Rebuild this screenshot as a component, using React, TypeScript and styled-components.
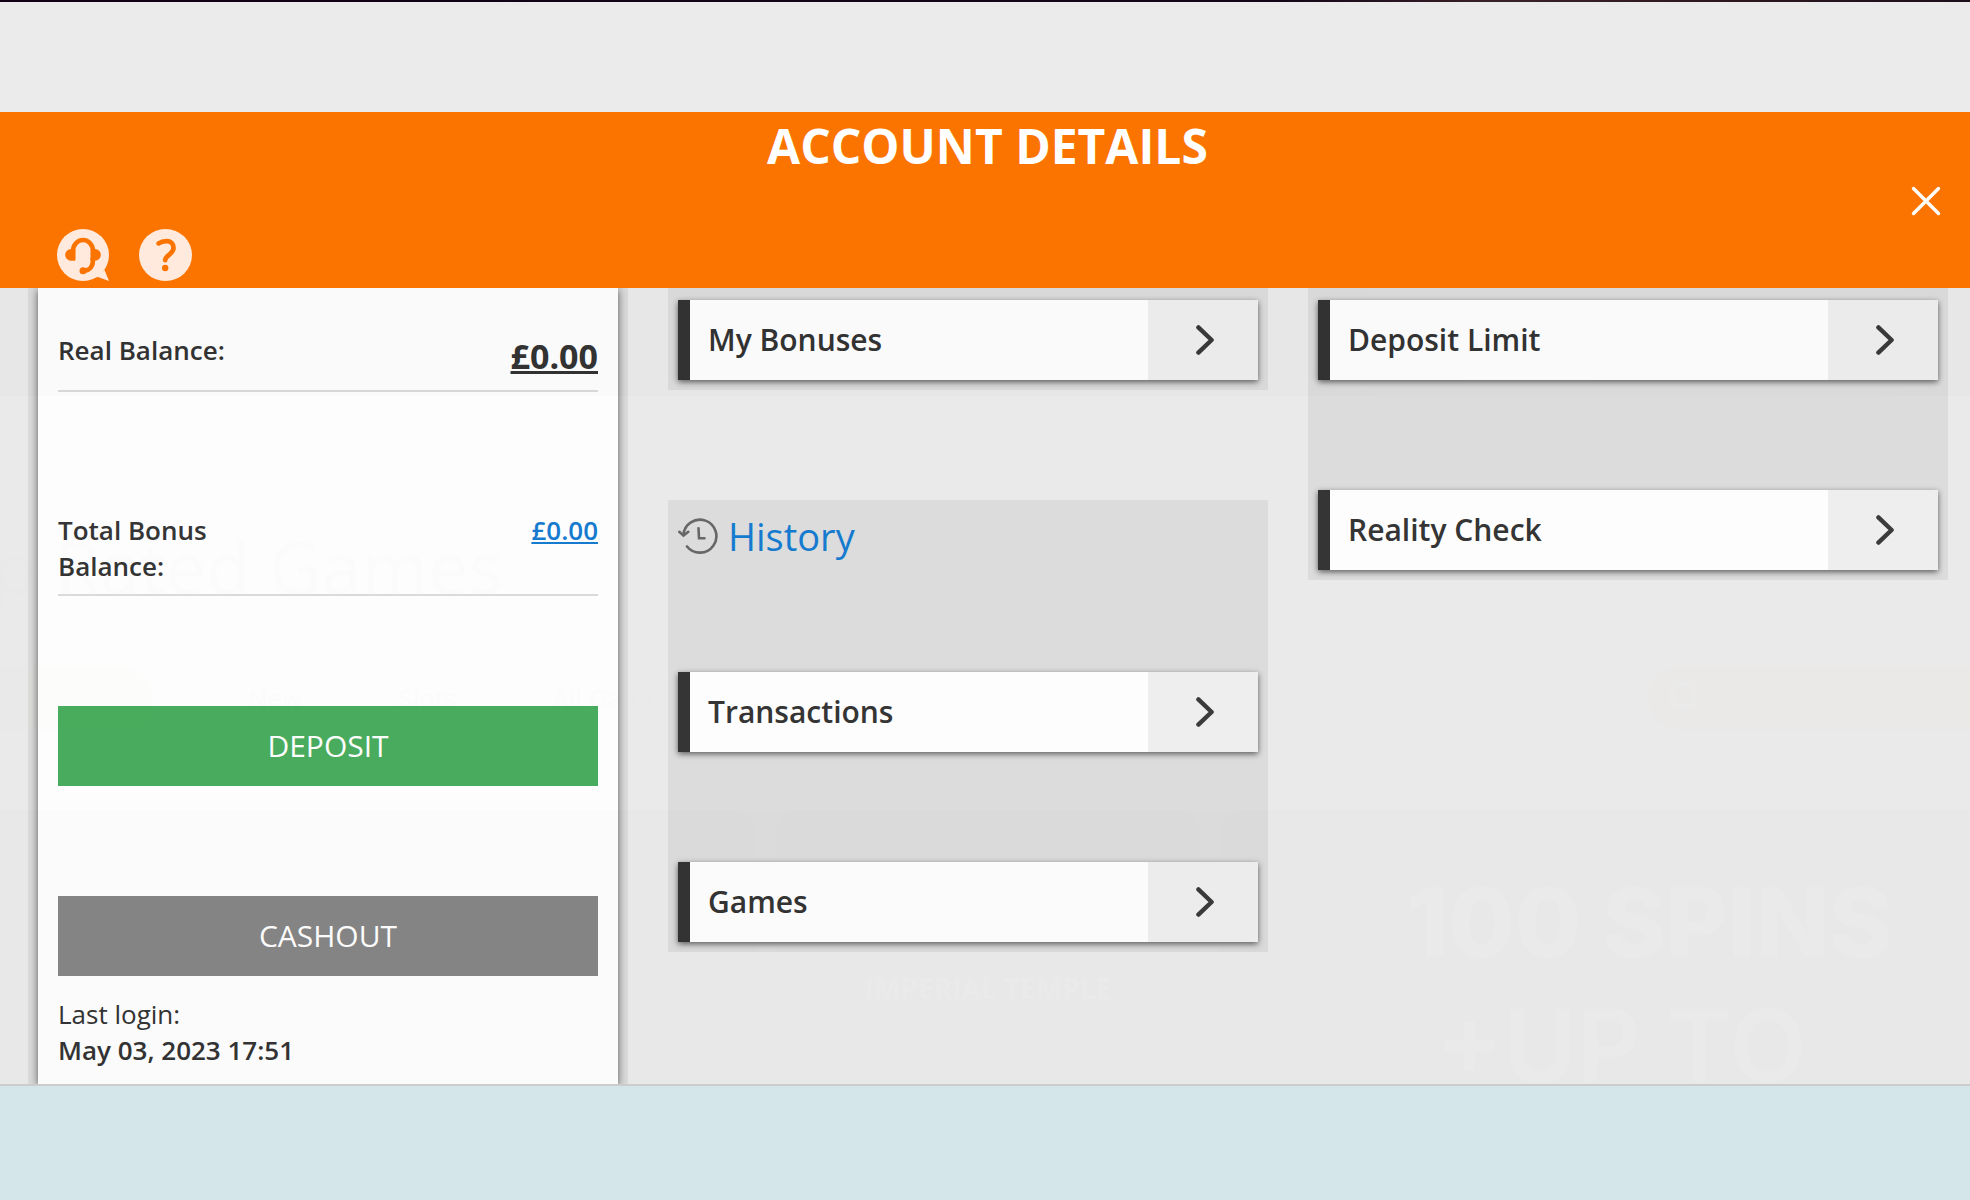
import React from "react";
import styled, { createGlobalStyle } from "styled-components";

const GlobalStyle = createGlobalStyle`
  *, *::before, *::after { box-sizing: border-box; }
  body {
    margin: 0;
    background: #9b9b9b;
    color: #333;
    font-family: "Open Sans", "Noto Sans", sans-serif;
    font-size: 26px;
    line-height: 36px;
  }
  h1, h2, p, dl, dt, dd, ul { margin: 0; padding: 0; }
`;

const Page = styled.div`
  position: relative;
  height: 100vh;
  min-height: 1100px;
  padding-top: 2px;
  overflow: hidden;
`;

/* Lobby page that stays faintly visible under the dialog */
const Lobby = styled.div`
  position: absolute;
  inset: 0;
  overflow: hidden;
  color: #555;
  white-space: nowrap;
`;

const LobbyBanner = styled.div`
  height: 396px;
  background: linear-gradient(90deg, #120016 0%, #140618 65%, #3a2128 76%, #2c1720 88%, #1d0f1a 100%);
`;

const LobbyHeading = styled.div`
  margin: 120px 0 0 -90px;
  font-size: 72px;
  line-height: 100px;
`;

const LobbyTabs = styled.div`
  display: flex;
  justify-content: space-between;
  height: 64px;
  margin-top: 50px;
`;

const LobbyTabList = styled.div`
  display: flex;
  align-items: center;
  gap: 96px;
`;

const LobbyPill = styled.div`
  width: 152px;
  height: 64px;
  background: #98825f;
  border-radius: 0 32px 32px 0;
`;

const LobbySearch = styled.div`
  width: 322px;
  padding: 14px 20px;
  background: #98754f;
  border-radius: 32px 0 0 32px;
`;

const LobbyTiles = styled.div`
  display: grid;
  grid-template-columns: 305px 431px 424px 1fr;
  gap: 20px;
  height: 400px;
  margin-top: 80px;
  background: #4a4a4a;
`;

const LobbyTile = styled.div`
  padding-top: 50px;
  background: #333;
  border-radius: 24px 24px 0 0;
  color: #9b9b9b;
  text-align: center;
  font-weight: 700;
`;

const LobbyTileName = styled.div`
  padding-top: 110px;
  font-size: 28px;
`;

const LobbyPromo = styled(LobbyTile)`
  padding: 50px 0 0 186px;
  text-align: left;
  font-family: Inter, "Open Sans", sans-serif;
  font-size: 96px;
  line-height: 124px;
  font-weight: 800;
`;

const LobbyPromoExtra = styled.div`
  padding-left: 30px;
  font-size: 100px;
  font-weight: 600;
`;

const Dialog = styled.main`
  position: relative;
  display: flex;
  flex-direction: column;
  height: 100%;
`;

const TopSpacer = styled.div`
  flex: none;
  height: 110px;
  background: #ebebeb;
`;

const Header = styled.header`
  flex: none;
  display: grid;
  grid-template-columns: 1fr auto 1fr;
  height: 176px;
  padding: 0 29px 7px 34px;
  background: #fb7400;
`;

const Title = styled.h1`
  padding-top: 2px;
  color: #fff;
  font-size: 48px;
  line-height: 64px;
  font-weight: 700;
  text-transform: uppercase;
`;

const Tools = styled.div`
  display: flex;
  align-self: end;
  gap: 30px;
  padding-left: 23px;
`;

const IconButton = styled.button`
  display: block;
  padding: 0;
  border: 0;
  background: none;
  color: #ffeadd;
  cursor: pointer;
  svg { display: block; }
`;

const CloseButton = styled(IconButton)`
  align-self: center;
  justify-self: end;
  padding-top: 9px;
  color: #fff;
`;

const Body = styled.div`
  flex: 1;
  min-height: 0;
  display: grid;
  grid-template-columns: 600fr 600fr 640fr;
  gap: 40px;
  padding: 0 22px 0 28px;
  overflow: hidden;
  background: #ececec;
  opacity: 0.98;
`;

const Footer = styled.footer`
  flex: none;
  height: 116px;
  border-top: 2px solid #ccc;
  background: #d4e6e9;
`;

const Summary = styled.section`
  padding: 0 10px;
  background: #dedede;
`;

const SummaryCard = styled.div`
  height: 100%;
  padding: 34px 20px 0;
  background: #fff;
  box-shadow: 0 2px 8px rgba(0, 0, 0, 0.6);
`;

const Balances = styled.dl`
  display: grid;
  gap: 110px;
`;

const BalanceRow = styled.div`
  display: flex;
  justify-content: space-between;
  padding: 10px 0;
  border-bottom: 2px solid #dcdcdc;
  font-weight: 600;
`;

const BalanceLabel = styled.dt`
  width: 40%;
`;

const Amount = styled.a<{ $main?: boolean }>`
  display: block;
  color: ${(p) => (p.$main ? "#333" : "#147bd1")};
  font-size: ${(p) => (p.$main ? 34 : 26)}px;
  line-height: ${(p) => (p.$main ? 48 : 36)}px;
  font-weight: ${(p) => (p.$main ? 700 : 600)};
  text-decoration: underline;
`;

const ActionButton = styled.button<{ $color: string }>`
  display: block;
  width: 100%;
  height: 80px;
  margin-top: 110px;
  border: 0;
  background: ${(p) => p.$color};
  color: #fff;
  font: inherit;
  font-size: 30px;
  text-transform: uppercase;
  cursor: pointer;
`;

const LastLogin = styled.p`
  padding-top: 20px;
  strong { display: block; font-weight: 600; }
`;

const Column = styled.div`
  display: flex;
  flex-direction: column;
  gap: 110px;
`;

const Panel = styled.section<{ $first?: boolean }>`
  display: grid;
  gap: 110px;
  padding: ${(p) => (p.$first ? 12 : 10)}px 10px 10px;
  background: #dedede;
`;

const PanelTitle = styled.h2`
  display: flex;
  align-items: center;
  gap: 10px;
  color: #147bd1;
  font-size: 38px;
  line-height: 52px;
  font-weight: 400;
`;

const MenuLink = styled.a`
  display: flex;
  height: 80px;
  border-left: 12px solid #333;
  background: #fff;
  box-shadow: 0 2px 6px rgba(0, 0, 0, 0.6);
  color: #333;
  font-size: 30px;
  line-height: 80px;
  font-weight: 600;
  text-decoration: none;
`;

const MenuLabel = styled.span`
  flex: 1;
  padding-left: 18px;
`;

const MenuArrow = styled.span`
  display: flex;
  align-items: center;
  justify-content: center;
  width: 110px;
  padding-left: 4px;
  background: #f0f0f0;
`;

function MenuItem({ label }: { label: string }) {
  return (
    <MenuLink href="#">
      <MenuLabel>{label}</MenuLabel>
      <MenuArrow>
        <svg width="18" height="30" viewBox="0 0 18 30" fill="none" stroke="#3a3a3a" strokeWidth="4.4" strokeLinecap="round" strokeLinejoin="round" aria-hidden="true">
          <path d="M2.4 2.4 15.6 15 2.4 27.6" />
        </svg>
      </MenuArrow>
    </MenuLink>
  );
}

function HeadsetIcon() {
  return (
    <svg width="52" height="52" viewBox="0 0 52 52" aria-hidden="true">
      <circle cx="26" cy="26" r="26" fill="currentColor" />
      <path fill="currentColor" d="M47.5 41 52 52 39.5 47.6z" />
      <g fill="none" stroke="#fb7400" strokeWidth="4.6">
        <path d="M16 30V22a10 11 0 0 1 20 0v9" />
        <path d="M35.8 29v3.500c0 5.400-3.800 9.100-9.800 9.500" />
      </g>
      <g fill="#fb7400">
        <path d="M18.300 31.700H14a5.850 5.850 0 0 1 0-11.700h4.300z" />
        <path d="M33.700 31.700H38a5.850 5.850 0 0 0 0-11.700h-4.300z" />
        <circle cx="26" cy="41.800" r="3.500" />
      </g>
    </svg>
  );
}

function HelpIcon() {
  return (
    <svg width="53" height="52" viewBox="0 0 53 52" aria-hidden="true">
      <ellipse cx="26.500" cy="26" rx="26.500" ry="26" fill="currentColor" />
      <path d="M19.700 14.400C22 12.800 24.800 12.200 27.400 12.200c4.500 0 7.100 2.600 7.100 6.600 0 6.300-8 7.300-8.300 12.200" fill="none" stroke="#fb7400" strokeWidth="4.800" strokeLinecap="round" />
      <circle cx="26.200" cy="39" r="3.200" fill="#fb7400" />
    </svg>
  );
}

function CloseIcon() {
  return (
    <svg width="30" height="30" viewBox="0 0 30 30" fill="none" stroke="currentColor" strokeWidth="3.400" strokeLinecap="round" aria-hidden="true">
      <path d="M2.500 2.500 27.500 27.500M27.500 2.500 2.500 27.500" />
    </svg>
  );
}

function HistoryIcon() {
  return (
    <svg width="40" height="36" viewBox="0 0 40 36" fill="none" stroke="#666" strokeWidth="2.600" strokeLinecap="round" aria-hidden="true">
      <path d="M5.400 17A16.500 16.500 0 1 1 9 28.500" />
      <path d="M1.300 13.800 5.500 17.600 10.300 13.800" />
      <path d="M20.500 10.300 21 20.300H26.500" />
    </svg>
  );
}

export default function App() {
  return (
    <>
      <GlobalStyle />
      <Page>
        <Lobby aria-hidden="true">
          <LobbyBanner />
          <LobbyHeading>Top Rated Games</LobbyHeading>
          <LobbyTabs>
            <LobbyTabList>
              <LobbyPill />
              <span>New</span>
              <span>Slots</span>
              <span>All Games</span>
            </LobbyTabList>
            <LobbySearch>
              <svg width="36" height="36" viewBox="0 0 36 36" fill="none" stroke="#9b9b9b" strokeWidth="4">
                <circle cx="15" cy="15" r="12" />
                <path d="M24 24 34 34" />
              </svg>
            </LobbySearch>
          </LobbyTabs>
          <LobbyTiles>
            <LobbyTile />
            <LobbyTile />
            <LobbyTile>
              <LobbyTileName>IMPERIAL TEMPLE</LobbyTileName>
            </LobbyTile>
            <LobbyPromo>
              100 SPINS
              <LobbyPromoExtra>+UP TO</LobbyPromoExtra>
            </LobbyPromo>
          </LobbyTiles>
        </Lobby>

        <Dialog>
          <TopSpacer />
          <Header>
            <Tools>
              <IconButton type="button" aria-label="Support">
                <HeadsetIcon />
              </IconButton>
              <IconButton type="button" aria-label="Help">
                <HelpIcon />
              </IconButton>
            </Tools>
            <Title>Account Details</Title>
            <CloseButton type="button" aria-label="Close">
              <CloseIcon />
            </CloseButton>
          </Header>

          <Body>
            <Summary>
              <SummaryCard>
                <Balances>
                  <BalanceRow>
                    <BalanceLabel>Real Balance:</BalanceLabel>
                    <dd>
                      <Amount href="#" $main>£0.00</Amount>
                    </dd>
                  </BalanceRow>
                  <BalanceRow>
                    <BalanceLabel>Total Bonus Balance:</BalanceLabel>
                    <dd>
                      <Amount href="#">£0.00</Amount>
                    </dd>
                  </BalanceRow>
                </Balances>
                <ActionButton type="button" $color="#48ac5c">Deposit</ActionButton>
                <ActionButton type="button" $color="#868686">Cashout</ActionButton>
                <LastLogin>
                  Last login:
                  <strong>May 03, 2023 17:51</strong>
                </LastLogin>
              </SummaryCard>
            </Summary>

            <Column>
              <Panel $first>
                <MenuItem label="My Bonuses" />
              </Panel>
              <Panel>
                <PanelTitle>
                  <HistoryIcon />
                  History
                </PanelTitle>
                <MenuItem label="Transactions" />
                <MenuItem label="Games" />
              </Panel>
            </Column>

            <Column>
              <Panel $first>
                <MenuItem label="Deposit Limit" />
                <MenuItem label="Reality Check" />
              </Panel>
            </Column>
          </Body>
          <Footer />
        </Dialog>
      </Page>
    </>
  );
}
